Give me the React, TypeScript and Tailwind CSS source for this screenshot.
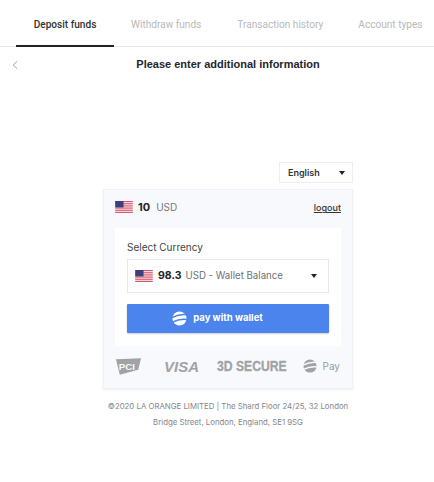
import React from "react";

function Flag({ className }: { className: string }) {
  const stripes = [0, 2, 4, 6, 8, 10, 12];
  return (
    <svg viewBox="0 0 19 13" className={className}>
      <rect width="19" height="13" fill="#f4f1f4" />
      {stripes.map((y) => (
        <rect key={y} y={y} width="19" height="1" fill="#d9495e" />
      ))}
      <rect width="9" height="7" fill="#3c3f7e" />
    </svg>
  );
}

function Caret() {
  return <span className="w-0 h-0 border-x-[3.5px] border-x-transparent border-t-[4px] border-t-[#222]" />;
}

function Globe({ className, color, cut }: { className: string; color: string; cut: string }) {
  return (
    <svg viewBox="0 0 16 16" className={className}>
      <circle cx="8" cy="8" r="7.5" fill={color} />
      <path d="M0 7 Q8 3 16 4" stroke={cut} strokeWidth="1.6" fill="none" />
      <path d="M0 12 Q8 8 16 9" stroke={cut} strokeWidth="1.6" fill="none" />
    </svg>
  );
}

const tabs = ["Withdraw funds", "Transaction history", "Account types"];

export default function App() {
  return (
    <div className="w-[434px] h-[482px] bg-white overflow-hidden font-['Roboto',sans-serif]">
      <div className="h-[47px] pl-4 flex border-b border-[#e8e8e8] text-[10.1px] whitespace-nowrap">
        <div className="w-[98px] h-[47px] pt-[5px] border-b-2 border-[#222] flex items-center justify-center text-[#333] font-medium">
          Deposit funds
        </div>
        <div className="flex items-center text-[#b9b9b9] pt-[4px]">
          <span className="ml-[17px]">{tabs[0]}</span>
          <span className="ml-[36px]">{tabs[1]}</span>
          <span className="ml-[35px]">{tabs[2]}</span>
        </div>
      </div>

      <div className="relative pt-[9px] pl-[22px] text-center text-[11px] font-bold text-[#23262d] font-['Liberation_Sans',sans-serif] leading-[16px]">
        <svg viewBox="0 0 8 12" className="absolute left-3 top-[13px] w-[6px] h-[10px]">
          <path d="M7 1 L1.5 6 L7 11" stroke="#999" strokeWidth="1.2" fill="none" />
        </svg>
        Please enter additional information
      </div>

      <div className="mt-[90px] ml-[103px] w-[250px] font-['Inter',sans-serif]">
        <div className="ml-auto w-[74px] h-[21px] border border-[#eee] flex items-center justify-between pl-[8px] pr-[7px] text-[9px] font-semibold text-[#333]">
          English
          <Caret />
        </div>

        <div className="mt-[6px] h-[200px] bg-[#f8f9fd] border border-[#f0f1f4] shadow-[0_1px_2px_rgba(0,0,0,0.08)] px-[11px] pt-[7px]">
          <div className="h-[20px] flex items-center text-[10px]">
            <Flag className="w-[18px] h-[12px]" />
            <span className="ml-[5px] font-bold text-[11px] text-[#222]">10</span>
            <span className="ml-[6px] text-[#77797f]">USD</span>
            <span className="ml-auto mt-[2px] text-[9px] font-medium text-[#333] underline">logout</span>
          </div>

          <div className="mt-[11px] bg-white h-[118px] px-[12px] pt-[12px]">
            <div className="text-[10px] leading-[14px] text-[#444]">Select Currency</div>
            <div className="mt-[5px] h-[34px] border border-[#e8e8e8] flex items-center pl-[7px] pr-[11px] text-[9.7px]">
              <Flag className="w-[18px] h-[12px]" />
              <span className="ml-[5px] font-bold text-[10.5px] text-[#222]">98.3</span>
              <span className="ml-[4px] text-[#6f7176]">USD - Wallet Balance</span>
              <span className="ml-auto flex"><Caret /></span>
            </div>
            <div className="mt-[11px] h-[29px] pr-[21px] bg-[#4a84ec] rounded-[1px] shadow-[0_1px_2px_rgba(0,0,0,0.2)] flex items-center justify-center text-white text-[9.5px] font-bold">
              <Globe className="w-[15px] h-[15px]" color="#fff" cut="#4a84ec" />
              <span className="ml-[6px]">pay with wallet</span>
            </div>
          </div>

          <div className="mt-[11px] flex items-center pr-[1px] text-[#a0a2a6]">
            <svg viewBox="0 0 30 18" className="w-[29px] h-[18px] shrink-0">
              <path d="M1 2 L27 1 L24 13 L5 18 Z" fill="#a0a2a6" />
              <text x="4" y="13" fontSize="10" fontWeight="700" fill="#f8f9fd" fontFamily="Liberation Sans">PCI</text>
            </svg>
            <span className="ml-[20px] text-[15px] leading-none font-bold italic font-['Liberation_Sans',sans-serif]">VISA</span>
            <span className="ml-[18px] w-[69px] text-[14px] leading-none font-bold font-['Liberation_Sans',sans-serif] whitespace-nowrap scale-x-[0.87] origin-left [-webkit-text-stroke:0.3px]">3D SECURE</span>
            <span className="flex items-center ml-auto text-[10px] text-[#9a9ca0]">
              <Globe className="w-[14px] h-[14px]" color="#a0a2a6" cut="#f8f9fd" />
              <span className="ml-[6px]">Pay</span>
            </span>
          </div>
        </div>

        <div className="mt-[9px] text-center text-[7.8px] leading-[16px] text-[#85878c] whitespace-nowrap">
          <div>©2020 LA ORANGE LIMITED | The Shard Floor 24/25, 32 London</div>
          <div>Bridge Street, London, England, SE1 9SG</div>
        </div>
      </div>
    </div>
  );
}
